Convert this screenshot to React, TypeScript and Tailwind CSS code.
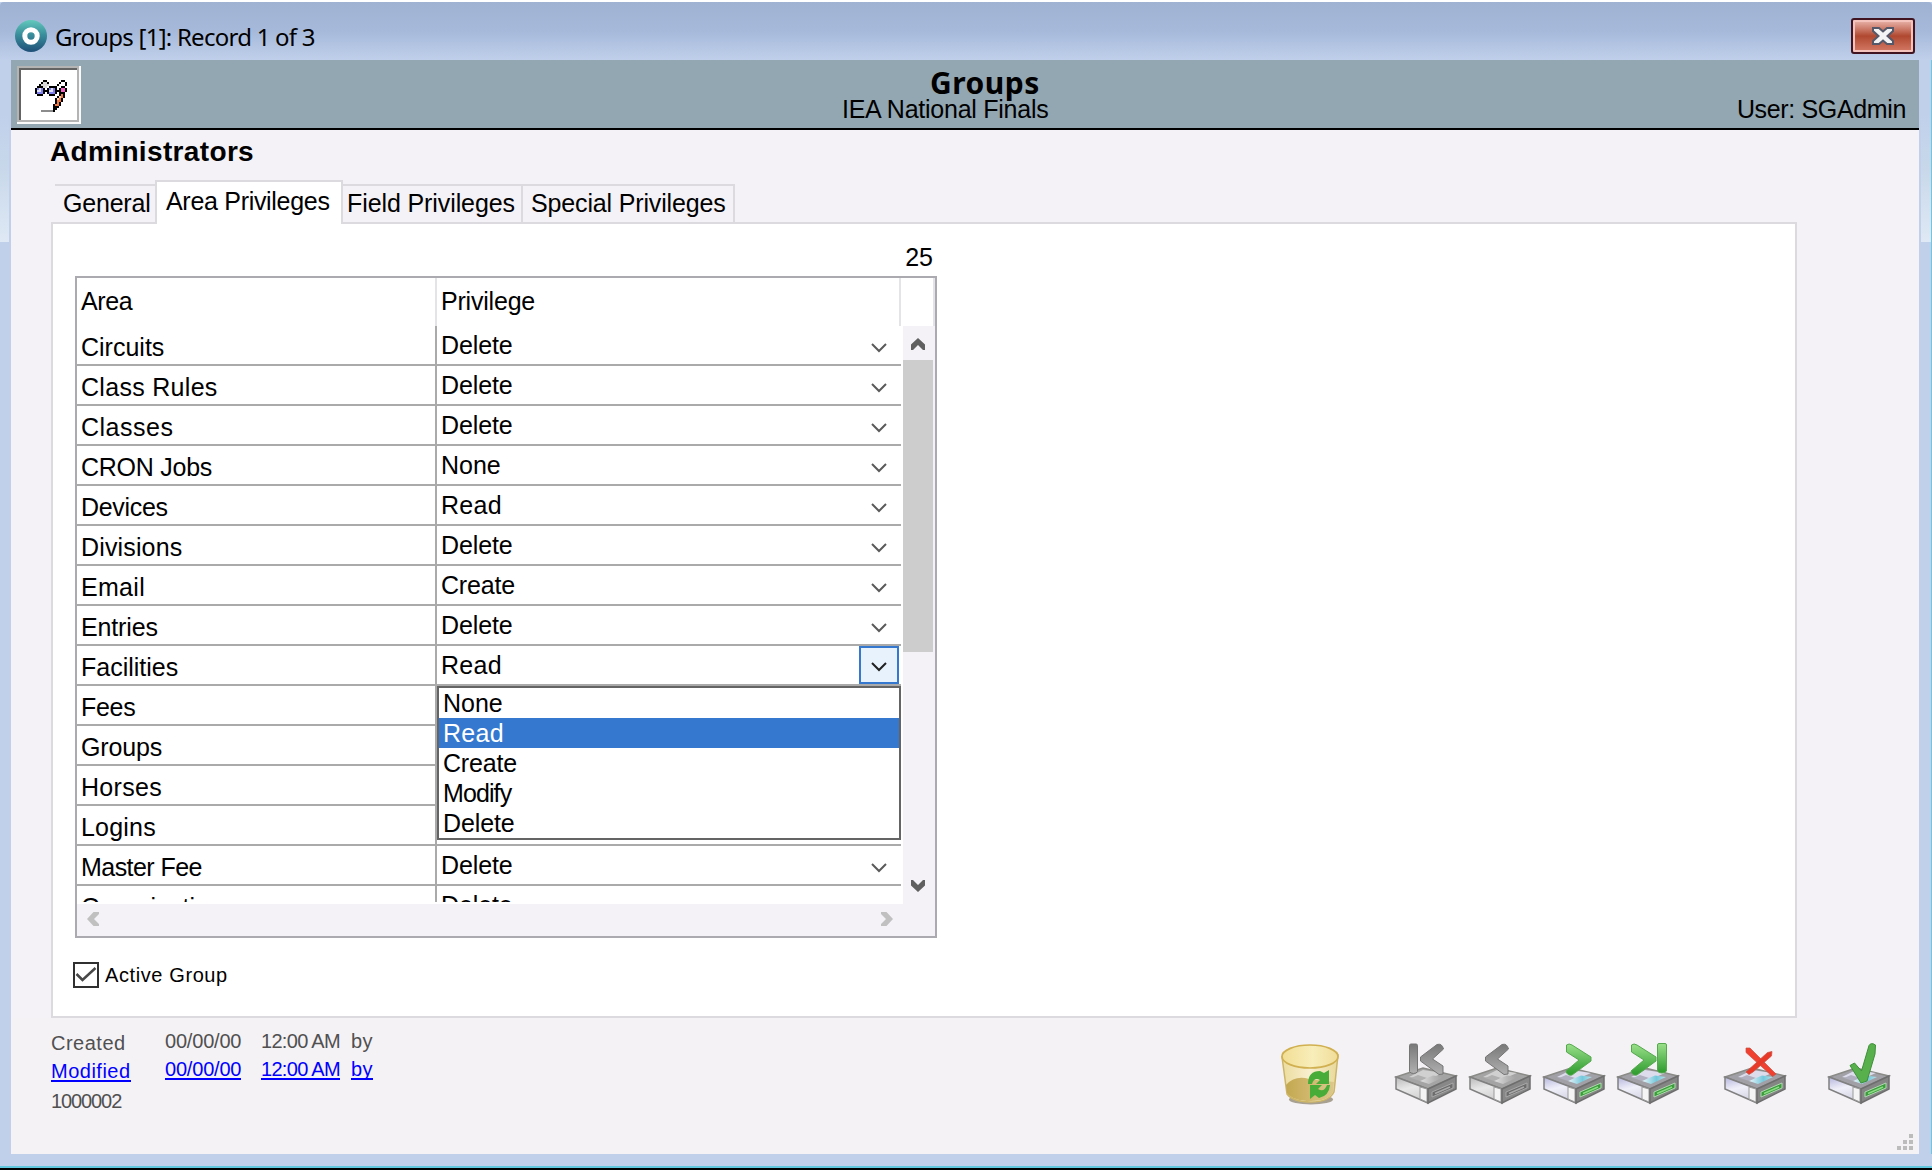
import React from "react";

type Row = { area: string; track: string; privilege?: string };

const rows: Row[] = [
  { area: "Circuits", track: "tracking-[0px]", privilege: "Delete" },
  { area: "Class Rules", track: "tracking-[0.3px]", privilege: "Delete" },
  { area: "Classes", track: "tracking-[0.5px]", privilege: "Delete" },
  { area: "CRON Jobs", track: "tracking-[-0.25px]", privilege: "None" },
  { area: "Devices", track: "tracking-[-0.3px]", privilege: "Read" },
  { area: "Divisions", track: "tracking-[0.15px]", privilege: "Delete" },
  { area: "Email", track: "tracking-[0.3px]", privilege: "Create" },
  { area: "Entries", track: "tracking-[-0.15px]", privilege: "Delete" },
  { area: "Facilities", track: "tracking-[0px]", privilege: "Read" },
  { area: "Fees", track: "tracking-[-0.3px]" },
  { area: "Groups", track: "tracking-[-0.15px]" },
  { area: "Horses", track: "tracking-[0.3px]" },
  { area: "Logins", track: "tracking-[0.2px]" },
  { area: "Master Fee", track: "tracking-[-0.55px]", privilege: "Delete" },
  { area: "Organizations", track: "tracking-[0px]", privilege: "Delete" },
];
const OPEN_ROW = 8;
const options = ["None", "Read", "Create", "Modify", "Delete"];
const optionTrack: Record<string, string> = {
  None: "tracking-[0px]",
  Read: "tracking-[0.3px]",
  Create: "tracking-[-0.2px]",
  Modify: "tracking-[-0.9px]",
  Delete: "tracking-[-0.1px]",
};

const sprite = [
  "....kk.......kk.",
  "...kggk.....k..k",
  "..kgggg....k...k",
  ".kkkgg.kkkk..kk.",
  "kbwbk.kbwbk.kppk",
  "kwwbkkkwwbkkkppk",
  "kbbbk.kbbbk.kkk.",
  ".kkk...kkk..kok.",
  "...........kyok.",
  "..........kyok..",
  "..........kook..",
  "..........kok...",
  ".........kook...",
  ".........kkk....",
  ".........kk.....",
  "...ddddddk......",
];
const spriteColors: Record<string, string> = {
  k: "#000000",
  g: "#d8d8d8",
  b: "#8080f0",
  w: "#e0e0ff",
  p: "#f060c0",
  o: "#f07840",
  y: "#fcd0b0",
  d: "#8c8c8c",
};

function GlassesPencil() {
  return (
    <svg width="32" height="32" viewBox="0 0 16 16" shapeRendering="crispEdges">
      {sprite.map((line, y) =>
        line
          .split("")
          .map((c, x) =>
            c === "." ? null : <rect key={x + "-" + y} x={x} y={y} width="1" height="1" fill={spriteColors[c]} />
          )
      )}
    </svg>
  );
}

function AppIcon() {
  return (
    <svg width="32" height="32" viewBox="0 0 32 32">
      <defs>
        <linearGradient id="app" x1="0" y1="0" x2="0" y2="1">
          <stop offset="0" stopColor="#62c9bc" />
          <stop offset="0.45" stopColor="#3a8f9c" />
          <stop offset="1" stopColor="#1f4f78" />
        </linearGradient>
      </defs>
      <circle cx="16" cy="16" r="16" fill="url(#app)" />
      <circle cx="16" cy="16" r="6.2" fill="none" stroke="#fff" strokeWidth="5" />
    </svg>
  );
}

function Chevron({ dark = false }: { dark?: boolean }) {
  return (
    <svg width="16" height="10" viewBox="0 0 16 10" fill="none">
      <path d="M1 1L8 8L15 1" stroke={dark ? "#202020" : "#5a5a5a"} strokeWidth="2" />
    </svg>
  );
}

function ScrollArrow({ turn, color }: { turn: string; color: string }) {
  return (
    <svg className={turn} width="14" height="12" viewBox="0 0 14 12">
      <path d="M0 6.500L7 0L14 6.500V12H12L7 7L2 12H0Z" fill={color} />
    </svg>
  );
}

type Mark = "first" | "prev" | "next" | "last" | "cancel" | "ok";

function Drive({ mark }: { mark: Mark }) {
  const gray = mark === "first" || mark === "prev";
  const id = "d-" + mark;
  const edge = gray ? "#757575" : "#55a84e";
  return (
    <svg width="66" height="64" viewBox="0 0 66 64" fill="none">
      <defs>
        <linearGradient id={id + "m"} x1="0" y1="0" x2="0" y2="1">
          <stop offset="0" stopColor={gray ? "#787878" : "#9ae08a"} />
          <stop offset="1" stopColor={gray ? "#b0b0b0" : "#2c9a2c"} />
        </linearGradient>
        <linearGradient id={id + "s"} x1="0" y1="0" x2="0.3" y2="1">
          <stop offset="0" stopColor={gray ? "#b8b8b8" : "#b4b4dc"} />
          <stop offset="0.5" stopColor={gray ? "#e8e8e8" : "#f0f0fa"} />
          <stop offset="1" stopColor={gray ? "#d0d0d0" : "#d4d4e4"} />
        </linearGradient>
        <linearGradient id={id + "t"} x1="0" y1="0" x2="1" y2="0">
          <stop offset="0" stopColor={gray ? "#e0e0e0" : "#e8f4f8"} />
          <stop offset="0.6" stopColor={gray ? "#b4b4b4" : "#74c8dc"} />
          <stop offset="1" stopColor={gray ? "#a0a0a0" : "#b8e0e8"} />
        </linearGradient>
      </defs>
      <path d="M3 35L30 26L63 34L35 47Z" fill={gray ? "#a4a4a4" : "#a0a0a6"} stroke="#8a8a86" strokeWidth="1.5" />
      <path d="M3 35L35 47V61L3 47Z" fill={"url(#" + id + "s)"} stroke="#808080" strokeWidth="1.5" />
      <path d="M27 45L34 47V60L27 57Z" fill="#f4f4f4" stroke="#9a9a9a" />
      <path d="M35 47L63 34V47L35 61Z" fill={gray ? "#888" : "#858585"} stroke="#6e6e6e" strokeWidth="1.5" />
      <path d="M39 50L60 41V46L39 55Z" fill={gray ? "#6c6c6c" : "#3a9c3a"} stroke={gray ? "#a8a8a8" : "#b0d8b0"} />
      <path d="M42 51.500L57 45" stroke={gray ? "#aaa" : "#8cdc84"} strokeWidth="1.5" />
      <path d="M16 35L30 28L50 31L34 38Z" fill={gray ? "#d0d0d0" : "#dcdcec"} />
      <path d="M18 36L25 33L34 36L27 39Z" fill={gray ? "#b0b0b0" : "#b0b0c0"} />
      <path d="M27 39L40 33.500L51 35L36 42Z" fill={"url(#" + id + "t)"} />
      {mark === "first" && (
        <>
          <path d="M18 2h5q1.500 0 1.500 1.500v26q-1 2-4 2q-3 0-4-2V3.500q0-1.500 1.500-1.500Z" fill={"url(#" + id + "m)"} stroke={edge} />
          <path d="M44 2.500Q49 1 50.500 7L39.500 17L50 24V32L46 32.500L27.500 19V15Z" fill={"url(#" + id + "m)"} stroke={edge} />
        </>
      )}
      {mark === "prev" && (
        <path d="M35 2.500Q40 1 41.500 7L30.500 17L41 24V32L37 32.500L18.500 19V15Z" fill={"url(#" + id + "m)"} stroke={edge} />
      )}
      {mark === "next" && (
        <path d="M25.500 3Q28 1 31 3L50 15V19L31 33Q26 34 25 29L38 18L25.500 10Z" fill={"url(#" + id + "m)"} stroke={edge} />
      )}
      {mark === "last" && (
        <>
          <path d="M16.500 3Q19 1 22 3L41 15V19L22 33Q17 34 16 29L29 18L16.500 10Z" fill={"url(#" + id + "m)"} stroke={edge} />
          <path d="M44 1.500h6q1.500 0 1.500 1.500v26q-1 2-4.500 2q-3.500 0-4.500-2V3q0-1.500 1.500-1.500Z" fill={"url(#" + id + "m)"} stroke={edge} />
        </>
      )}
      {mark === "cancel" && (
        <>
          <path d="M24 6L28 6L54 32L50.500 34.500L24 10.500Z" fill="#f04030" stroke="#c85040" strokeWidth="0.700" />
          <path d="M45.500 10.500L50 9.500L49.500 14L31 30L27 32.500L24 30Z" fill="#e83828" stroke="#c85040" strokeWidth="0.700" />
        </>
      )}
      {mark === "ok" && (
        <path d="M24 23.500L28.500 21L35.500 29L43 3.500Q45 0 49.500 3L49 12L41 39L35 41Z" fill="#58b04c" stroke="#3f8f3a" />
      )}
    </svg>
  );
}

function RecycleBin() {
  return (
    <svg width="64" height="64" viewBox="0 0 64 64" fill="none">
      <defs>
        <linearGradient id="bin" x1="0" y1="0" x2="1" y2="0">
          <stop offset="0" stopColor="#ecdc9c" />
          <stop offset="0.5" stopColor="#f8efd0" />
          <stop offset="1" stopColor="#e8d898" />
        </linearGradient>
        <linearGradient id="rim" x1="0" y1="0" x2="1" y2="0">
          <stop offset="0" stopColor="#f2de94" />
          <stop offset="0.55" stopColor="#f8eeba" />
          <stop offset="1" stopColor="#f0dc98" />
        </linearGradient>
        <linearGradient id="fill" x1="0" y1="0" x2="1" y2="0">
          <stop offset="0" stopColor="#c4a850" />
          <stop offset="1" stopColor="#dcc88c" />
        </linearGradient>
      </defs>
      <ellipse cx="32" cy="57.500" rx="22" ry="5" fill="#a8a090" />
      <path d="M3 15L8 52Q14 60 32 60Q50 60 55 50L59 13Z" fill="url(#bin)" stroke="#cdb568" strokeWidth="1.500" />
      <path d="M7 43Q16 33 30 37L55 40L54 50Q50 59 32 59Q14 59 8 51Z" fill="url(#fill)" />
      <ellipse cx="31" cy="14.500" rx="28" ry="11.500" fill="url(#rim)" stroke="#d0b050" strokeWidth="1.700" />
      <path d="M29 42Q29 29 41 29L45 31L50 28V42H37L41 38Q35 35 33 42Z" fill="#48ac38" />
      <path d="M31 43H43L39 47Q45 51 48 43H51Q50 54 40 56L36 53L31 57Z" fill="#48ac38" />
    </svg>
  );
}

function StampRow({
  label, date, time, link = false,
}: { label: string; date: string; time: string; link?: boolean }) {
  const tone = link ? "text-[#0000ff] border-b-2 border-[#0000ff]" : "text-[#505050]";
  return (
    <div className="flex h-[30px] items-start">
      <div className="w-[114px] pt-[2px]">
        <span className={"block h-[22px] w-fit tracking-[0.5px] " + tone}>{label}</span>
      </div>
      <div className="w-[96px]">
        <span className={"block h-[22px] w-fit tracking-[-0.2px] " + tone}>{date}</span>
      </div>
      <div className="w-[90px]">
        <span className={"block h-[22px] w-fit tracking-[-0.7px] " + tone}>{time}</span>
      </div>
      <span className={"block h-[22px] w-fit tracking-[0.5px] " + tone}>by</span>
    </div>
  );
}

function Grid() {
  return (
    <div className="ml-[22px] h-[662px] w-[862px] border-2 border-[#aaaab0] bg-white">
      <div className="flex h-[48px] leading-[26px]">
        <div className="w-[360px] border-r-2 border-[#e4e4e8] pt-[10px] pl-[4px] tracking-[-0.4px]">Area</div>
        <div className="w-[464px] border-r-2 border-[#e4e4e8] pt-[10px] pl-[4px] tracking-[-0.2px]">Privilege</div>
        <div className="w-[34px] border-r-2 border-[#e4e4e8]" />
      </div>
      <div className="flex h-[578px]">
        <div className="h-[576px] w-[824px] overflow-hidden">
          {rows.map(({ area, track, privilege }, i) => (
            <div key={area} className="relative flex h-[40px] border-b-2 border-[#aaaaaa] leading-[26px]">
              <div className={"w-[360px] border-r-2 border-[#aaaaaa] pt-[8px] pl-[4px] " + track}>{area}</div>
              {privilege && (
                <div className={"grow pt-[6px] pl-[4px] " + optionTrack[privilege]}>{privilege}</div>
              )}
              {i === OPEN_ROW ? (
                <div className="mr-[2px] flex h-[38px] w-[40px] items-center justify-center border-2 border-[#3478d0] bg-[#e8f2fc] pt-[4px]">
                  <Chevron dark />
                </div>
              ) : (
                privilege && (
                  <div className="mr-[2px] flex h-[38px] w-[40px] items-center justify-center pt-[6px]">
                    <Chevron />
                  </div>
                )
              )}
              {i === OPEN_ROW && (
                <div className="absolute top-[40px] left-[360px] z-20 h-[154px] w-[464px] border-2 border-[#646464] bg-white">
                  {options.map((o) => (
                    <div
                      key={o}
                      className={
                        "h-[30px] pt-[2px] pl-[4px] " +
                        optionTrack[o] +
                        (o === "Read" ? " bg-[#3478d0] text-white" : "")
                      }
                    >
                      {o}
                    </div>
                  ))}
                </div>
              )}
            </div>
          ))}
        </div>
        <div className="ml-[2px] flex w-[32px] flex-col bg-[#f4f2f6]">
          <div className="flex h-[34px] w-[30px] items-center justify-center pt-[2px]">
            <ScrollArrow turn="" color="#606060" />
          </div>
          <div className="h-[292px] w-[30px] bg-[#cdcdcd]" />
          <div className="grow" />
          <div className="flex h-[36px] w-[30px] items-center justify-center">
            <ScrollArrow turn="rotate-180" color="#606060" />
          </div>
        </div>
      </div>
      <div className="flex h-[32px] items-center justify-between bg-[#f4f2f6] pr-[41px] pb-[2px] pl-[9px]">
        <ScrollArrow turn="-rotate-90" color="#c0c0c0" />
        <ScrollArrow turn="rotate-90" color="#c0c0c0" />
      </div>
    </div>
  );
}

export default function App() {
  return (
    <div className="flex h-[1170px] w-[1932px] flex-col overflow-hidden bg-[#c0d0eb] font-['Liberation_Sans',Arial,sans-serif] text-[25px] text-black">
      <div className="h-[2px] bg-white" />
      <div className="flex h-[58px] items-start rounded-t-[4px] bg-linear-to-b from-[#a0b2d2] via-[#a6b9da] to-[#c0d0eb] pl-[15px]">
        <div className="mt-[18px]">
          <AppIcon />
        </div>
        <div className="mt-[18px] ml-[8px] font-['Noto_Sans',sans-serif] text-[24px] leading-[34px] tracking-[-0.75px] whitespace-nowrap">
          Groups [1]: Record 1 of 3
        </div>
        <div className="mt-[16px] mr-[17px] ml-auto h-[36px] w-[64px] rounded-[3px] border-2 border-[#401420] bg-[#f4c4bc] p-[2px]">
          <div className="flex h-full items-center justify-center bg-linear-to-b from-[#e4aaa0] from-0% via-[#b04830] via-50% to-[#d07460]">
            <svg width="24" height="20" viewBox="0 0 24 20">
              <path
                d="M2 2H8L12 5.500L16 2H22V5L16.500 10L22 15V18H16L12 14.500L8 18H2V15L7.500 10L2 5Z"
                fill="#f4f4f4"
                stroke="#545868"
                strokeWidth="2"
              />
            </svg>
          </div>
        </div>
      </div>

      <div className="flex h-[1094px]">
        <div className="w-[11px]">
          <div className="h-[182px] w-[9px] bg-linear-to-b from-[#c0d0eb] from-30% via-[#c8d8ea] via-60% to-[#dfe9f5]" />
        </div>

        <div className="flex w-[1908px] flex-col bg-[#f4f2f6]">
          <div className="flex h-[70px] border-b-2 border-black bg-[#93a7b2]">
            <div className="mt-[6px] ml-[6px] h-[58px] w-[64px] border-r-2 border-b-2 border-[#fafafa]">
              <div className="h-full w-full border-2 border-[#b4b4b4]">
                <div className="h-full w-full border-t-2 border-l-2 border-[#646464] bg-white pt-[10px] pl-[14px]">
                  <GlassesPencil />
                </div>
              </div>
            </div>
            <div className="ml-[761px] w-[300px]">
              <div className="mt-[5px] pl-[88px] font-['Noto_Sans',sans-serif] text-[30px] leading-[36px] font-bold tracking-[0.5px]">
                Groups
              </div>
              <div className="mt-[-5px] leading-[26px] tracking-[-0.25px]">IEA National Finals</div>
            </div>
            <div className="mt-[36px] mr-[13px] ml-auto leading-[26px] tracking-[-0.35px]">User: SGAdmin</div>
          </div>

          <div className="h-[50px] pt-[6px] pl-[39px] text-[28px] leading-[32px] font-bold tracking-[0.35px]">
            Administrators
          </div>

          <div className="flex h-[42px] items-end pl-[44px] leading-[26px]">
            <div className="h-[38px] w-[100px] border-t-2 border-[#dcdadf] pt-[4px] pl-[8px] tracking-[-0.2px]">
              General
            </div>
            <div className="relative z-10 -mb-[2px] h-[44px] w-[188px] border-2 border-b-0 border-[#dcdadf] bg-white pt-[6px] pl-[9px] tracking-[-0.3px]">
              Area Privileges
            </div>
            <div className="h-[38px] w-[180px] border-t-2 border-r-2 border-[#dcdadf] pt-[4px] pl-[4px] tracking-[-0.1px]">
              Field Privileges
            </div>
            <div className="h-[38px] w-[212px] border-t-2 border-r-2 border-[#dcdadf] pt-[4px] pl-[8px] tracking-[-0.15px]">
              Special Privileges
            </div>
          </div>

          <div className="ml-[40px] h-[796px] w-[1746px] border-2 border-[#dcdadf] bg-white">
            <div className="h-[52px] w-[880px] pt-[20px] text-right leading-[26px]">25</div>
            <Grid />
            <div className="mt-[24px] ml-[20px] flex h-[26px] items-center">
              <div className="flex h-[26px] w-[26px] items-center justify-center border-2 border-[#303030]">
                <svg width="22" height="18" viewBox="0 0 22 18" fill="none">
                  <path d="M1.500 8L7.500 14L20.500 2" stroke="#484848" strokeWidth="2.500" />
                </svg>
              </div>
              <span className="ml-[6px] text-[20px] leading-[22px] tracking-[0.6px]">Active Group</span>
            </div>
          </div>

          <div className="flex h-[136px] bg-[#f5f2f6] pl-[40px]">
            <div className="w-[1228px] pt-[12px] text-[20px] leading-[22px]">
              <StampRow label="Created" date="00/00/00" time="12:00 AM" />
              <div className="-mt-[2px]">
                <StampRow link label="Modified" date="00/00/00" time="12:00 AM" />
              </div>
              <div className="pt-[2px] tracking-[-1.1px] text-[#505050]">1000002</div>
            </div>
            <div className="flex h-[64px] pt-[24px]">
              <div className="w-[114px]">
                <RecycleBin />
              </div>
              <div className="w-[74px]"><Drive mark="first" /></div>
              <div className="w-[74px]"><Drive mark="prev" /></div>
              <div className="w-[74px]"><Drive mark="next" /></div>
              <div className="w-[107px]"><Drive mark="last" /></div>
              <div className="w-[104px]"><Drive mark="cancel" /></div>
              <div className="w-[76px]"><Drive mark="ok" /></div>
            </div>
            <div className="-ml-[5px] self-end pb-[4px]">
              <svg className="block" width="16" height="16" viewBox="0 0 16 16" fill="#bcbcbc">
                <path d="M12 0h4v4h-4zM6 6h4v4h-4zM12 6h4v4h-4zM0 12h4v4h-4zM6 12h4v4h-4zM12 12h4v4h-4z" />
              </svg>
            </div>
          </div>
        </div>

        <div className="flex w-[13px] justify-end border-r border-[#6cc8e0]">
          <div className="h-[182px] w-[10px] bg-linear-to-b from-[#c0d0eb] from-30% via-[#c8d8ea] via-60% to-[#dfe9f5]" />
        </div>
      </div>

      <div className="h-[12px] bg-[#c0d0eb]" />
      <div className="h-[2px] bg-[#62c8de]" />
      <div className="h-[2px] bg-black" />
    </div>
  );
}
